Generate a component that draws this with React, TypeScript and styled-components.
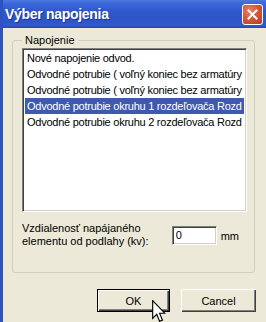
import React from "react";
import styled, { createGlobalStyle } from "styled-components";

const GlobalStyle = createGlobalStyle`
  html, body {
    margin: 0;
    padding: 0;
    background: #ece9d8;
  }
  body {
    width: 266px;
    height: 322px;
    overflow: hidden;
    font-family: "Liberation Sans", Arial, sans-serif;
  }
`;

const Window = styled.div`
  position: relative;
  display: flex;
  flex-direction: column;
  height: 322px;
  border-left: 3px solid #2f52c2;
  background: #ece9d8;
`;

const TitleBar = styled.div`
  height: 28px;
  display: flex;
  align-items: center;
  justify-content: space-between;
  padding: 0 3px 0 2px;
  background: linear-gradient(
    to bottom,
    #4f78e0 0%,
    #3c67da 12%,
    #2f58cc 40%,
    #2d55c8 70%,
    #3159cc 90%,
    #2447b4 100%
  );
`;

const Title = styled.span`
  color: #fff;
  font-size: 14px;
  font-weight: bold;
  letter-spacing: -0.3px;
  text-shadow: 1px 1px 0 #1a3391;
`;

const CloseButton = styled.div`
  width: 19px;
  height: 19px;
  border: 1px solid #fff;
  border-radius: 3px;
  background: radial-gradient(circle at 35% 30%, #e8826a 0%, #d45a3a 45%, #b8391c 100%);
  display: flex;
  align-items: center;
  justify-content: center;
`;

const Body = styled.div`
  flex: 1;
  display: flex;
  flex-direction: column;
  padding: 12px 10px 0 9px;
`;

const GroupBox = styled.div`
  position: relative;
  margin-right: 1px;
  height: 233px;
  box-sizing: border-box;
  border: 1px solid #d0d0bf;
  border-radius: 3px;
  padding: 7px 7px 0 9px;
  display: flex;
  flex-direction: column;
`;

const Legend = styled.span`
  position: absolute;
  top: -8px;
  left: 9px;
  padding: 0 3px;
  background: #ece9d8;
  color: #000;
  font-size: 11px;
  line-height: 14px;
`;

const ListBox = styled.div`
  height: 164px;
  box-sizing: border-box;
  background: #fff;
  border-top: 1px solid #808080;
  border-left: 1px solid #808080;
  border-right: 1px solid #fff;
  border-bottom: 1px solid #fff;
  box-shadow: inset 1px 1px 0 #404040, inset -1px -1px 0 #d4d0c8;
  padding: 1px 2px;
  overflow: hidden;
`;

const ListRow = styled.div<{ $selected?: boolean }>`
  height: 16px;
  line-height: 16px;
  padding-left: 2px;
  font-size: 11px;
  letter-spacing: -0.25px;
  white-space: nowrap;
  overflow: hidden;
  color: ${(p) => (p.$selected ? "#fff" : "#000")};
  background: ${(p) => (p.$selected ? "#3e5aae" : "transparent")};
`;

const FieldRow = styled.div`
  margin-top: 10px;
  display: flex;
  align-items: center;
`;

const FieldLabel = styled.div`
  flex: 1;
  font-size: 11px;
  line-height: 13px;
  color: #000;
`;

const TextInput = styled.div`
  width: 45px;
  height: 19px;
  box-sizing: border-box;
  background: #fff;
  border-top: 1px solid #808080;
  border-left: 1px solid #808080;
  border-right: 1px solid #fff;
  border-bottom: 1px solid #fff;
  box-shadow: inset 1px 1px 0 #404040, inset -1px -1px 0 #d4d0c8;
  font-size: 11px;
  line-height: 17px;
  padding-left: 3px;
  margin-top: 1px;
`;

const Unit = styled.span`
  font-size: 11px;
  margin: 2px 8px 0 4px;
`;

const ButtonRow = styled.div`
  margin-top: 16px;
  display: flex;
  justify-content: flex-end;
  gap: 11px;
`;

const Button = styled.button<{ $default?: boolean }>`
  width: ${(p) => (p.$default ? "73px" : "75px")};
  height: 23px;
  box-sizing: border-box;
  padding: 0;
  font-family: "Liberation Sans", Arial, sans-serif;
  font-size: 11px;
  color: #000;
  background: #ece9d8;
  border: ${(p) => (p.$default ? "1px solid #000" : "none")};
  box-shadow: inset 1px 1px 0 #fff, inset -1px -1px 0 #404040, inset -2px -2px 0 #808080;
  cursor: default;
`;

const Pointer = styled.svg`
  position: absolute;
  left: 149px;
  top: 300px;
`;

// visible part of each entry, as the list shows it
const items = [
  "Nové napojenie odvod.",
  "Odvodné potrubie ( voľný koniec bez armatúry",
  "Odvodné potrubie ( voľný koniec bez armatúry",
  "Odvodné potrubie okruhu 1 rozdeľovača Rozd",
  "Odvodné potrubie okruhu 2 rozdeľovača Rozd",
];

export default function App() {
  return (
    <>
      <GlobalStyle />
      <Window>
        <TitleBar>
          <Title>Výber napojenia</Title>
          <CloseButton>
            <svg width="11" height="11" viewBox="0 0 11 11">
              <path d="M1.5 1.5 L9.5 9.5 M9.5 1.5 L1.5 9.5" stroke="#fff" strokeWidth="2" strokeLinecap="square" />
            </svg>
          </CloseButton>
        </TitleBar>
        <Body>
          <GroupBox>
            <Legend>Napojenie</Legend>
            <ListBox>
              {items.map((t, i) => (
                <ListRow key={i} $selected={i === 3}>
                  {t}
                </ListRow>
              ))}
            </ListBox>
            <FieldRow>
              <FieldLabel>
                Vzdialenosť napájaného
                <br />
                elementu od podlahy (kv):
              </FieldLabel>
              <TextInput>0</TextInput>
              <Unit>mm</Unit>
            </FieldRow>
          </GroupBox>
          <ButtonRow>
            <Button $default>OK</Button>
            <Button>Cancel</Button>
          </ButtonRow>
        </Body>
        <Pointer width="14" height="23" viewBox="0 0 12 20">
          <path
            d="M0.5 0.5 L0.5 16 L4 12.5 L6.5 18.5 L9 17.5 L6.5 11.5 L11 11.5 Z"
            fill="#fff"
            stroke="#000"
            strokeWidth="1"
            strokeLinejoin="miter"
          />
        </Pointer>
      </Window>
    </>
  );
}
